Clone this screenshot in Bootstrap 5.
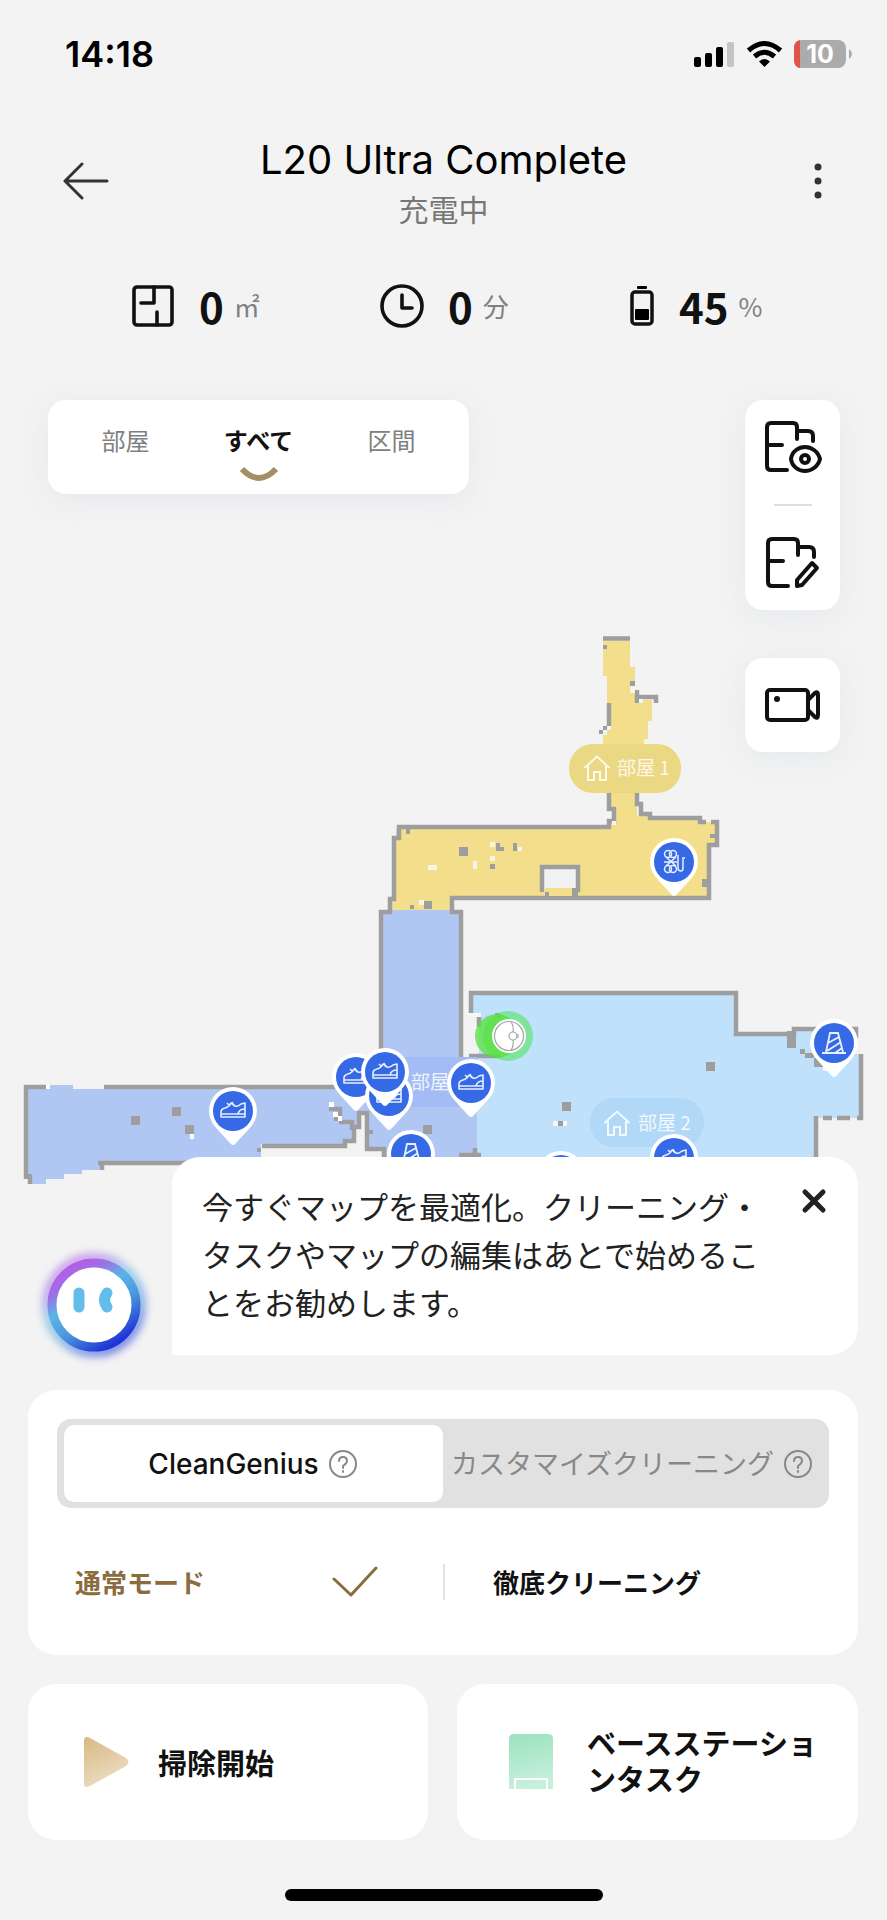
<!DOCTYPE html>
<html lang="ja">
<head>
<meta charset="utf-8">
<meta name="viewport" content="width=device-width, initial-scale=1">
<title>L20 Ultra Complete</title>
<link href="https://cdn.jsdelivr.net/npm/bootstrap@5.3.0/dist/css/bootstrap.min.css" rel="stylesheet">
<style>
  body { background: #f3f3f3; color: #111; font-family: Inter, "Noto Sans CJK JP", sans-serif; }
  button { border: 0; background: none; padding: 0; color: inherit; }
  svg { display: block; flex: none; }
  .jp { font-family: "Noto Sans CJK JP", sans-serif; }
  .line { fill: none; stroke: currentColor; stroke-linecap: round; stroke-linejoin: round; }

  .status-bar { height: 108px; padding: 0 34px 0 65px; color: #000; }
  .clock { font-size: 36px; font-weight: 600; }

  .app-header { padding: 28px 45px 50px; }
  .head-btn { width: 64px; height: 90px; color: #333; }
  .app-title { font-size: 40px; line-height: 48px; font-weight: 400; color: #000; margin: 0; }
  .app-state { font-size: 30px; line-height: 48px; color: #777; }

  .stats { padding: 0 70px 40px; }
  .stat { height: 48px; padding-left: 62px; }
  .stat-num { font-size: 42px; line-height: 48px; font-weight: 700; margin: 0 10px 0 25px; }
  .stat-unit { font-size: 26px; line-height: 48px; color: #808080; }

  .map-stage { position: relative; }
  .map-stage > svg { width: 100%; height: auto; }
  .map-controls { position: absolute; inset: 30px 47px auto 48px; }
  .float-card { background: #fff; border-radius: 18px; box-shadow: 0 6px 24px rgba(190, 205, 220, .25); }
  .mode-tabs { width: 421px; height: 94px; padding: 0 11px; }
  .mode-tabs button { flex: 1 1 0; gap: 10px; font-size: 24px; line-height: 32px; color: #808080; padding-top: 24px; }
  .mode-tabs .active { color: #111; font-weight: 700; }
  .tool-btn { width: 95px; height: 94px; }
  .tool-rule { width: 38px; height: 2px; background: #dedede; margin: 10px 0; }

  .assistant { margin-top: -33px; padding: 0 29px 0 28px; position: relative; }
  .avatar { width: 144px; padding-right: 12px; }
  .bubble { background: #fff; border-radius: 28px 28px 28px 0; padding: 25px 30px 29px; font-size: 31px; line-height: 48px; color: #222; }
  .bubble-close { height: 32px; margin: 3px 0; }

  .panel { background: #fff; border-radius: 28px; margin: 35px 29px 0 28px; padding: 29px; }
  .segment { background: #e1e1e1; border-radius: 14px; padding: 6px 7px; height: 89px; color: #888; }
  .segment button { border-radius: 10px; flex: 1 1 50%; white-space: nowrap; }
  .segment .active { background: #fff; }
  .seg-name { font-size: 28px; font-weight: 500; color: #111; }
  .seg-jp { font-size: 27px; }
  .programs { margin: 55px 0 25px; height: 38px; font-size: 26px; }
  .programs button { flex: 1 1 50%; font-weight: 700; line-height: 36px; }
  .program-on { color: #8a6c3e; padding: 0 65px 0 18px; }
  .program-off { border-left: 2px solid #e2e2e2; padding-left: 48px; text-align: left; }

  .actions { margin: 29px 29px 0 28px; gap: 29px; }
  .actions button { background: #fff; border-radius: 28px; height: 156px; flex: 1 1 50%; text-align: left; font-size: 29px; line-height: 36px; font-weight: 700; }
  .start-btn { padding-left: 56px; }
  .base-btn { padding: 0 29px 0 52px; }
  .base-name { padding: 0 0 4px 34px; }
  .home-bar { width: 318px; height: 12px; border-radius: 6px; background: #000; margin: 49px auto 19px; }
</style>
</head>
<body>

<div class="status-bar d-flex align-items-center justify-content-between">
  <span class="clock">14:18</span>
  <svg width="160" height="32" viewBox="694 38 160 32" aria-hidden="true">
    <rect x="695" y="57" width="7" height="10" rx="2"/>
    <rect x="706" y="53" width="7" height="14" rx="2"/>
    <rect x="717" y="47" width="7" height="20" rx="2"/>
    <rect x="728" y="42" width="7" height="25" rx="2" fill="#c4c4c4"/>
    <g fill="none" stroke="#000" stroke-width="5">
      <path d="M749.500 50.500 Q765.500 36.500 781.500 50.500"/>
      <path d="M755.500 56.500 Q765.500 48 775.500 56.500"/>
    </g>
    <path d="M765.500 67 L760 61.500 Q765.500 56.500 771 61.500Z"/>
    <rect x="795" y="40" width="52" height="28" rx="8" fill="#ababab"/>
    <path d="M801 40Q795 41 795 48V60Q795 67 801 68Z" fill="#e25449"/>
    <path d="M850 49 Q853 51 853 54 Q853 57 850 59Z" fill="#ababab"/>
    <text x="821" y="63" text-anchor="middle" font-family="Inter, sans-serif" font-size="25" font-weight="700" fill="#fff">10</text>
  </svg>
</div>

<header class="app-header d-flex align-items-start justify-content-between">
  <button class="head-btn d-flex align-items-center justify-content-end" aria-label="戻る">
    <svg class="line" width="46" height="40" viewBox="0 0 46 40" stroke-width="3"><path d="M44 20H2M19 3 2 20 19 37"/></svg>
  </button>
  <div class="text-center">
    <h1 class="app-title">L20 Ultra Complete</h1>
    <div class="app-state jp">充電中</div>
  </div>
  <button class="head-btn d-flex align-items-center justify-content-end" aria-label="メニュー">
    <svg width="48" height="40" viewBox="0 0 48 40" fill="currentColor"><circle cx="24" cy="6" r="3.500"/><circle cx="24" cy="20" r="3.500"/><circle cx="24" cy="34" r="3.500"/></svg>
  </button>
</header>

<section class="stats row g-0 jp">
  <div class="col stat d-flex align-items-center">
    <svg class="line" width="42" height="42" viewBox="0 0 42 42" stroke-width="3.600"><rect x="2" y="2" width="38" height="38" rx="3"/><path d="M22 2V18H9M25 40V27"/></svg>
    <span class="stat-num">0</span><span class="stat-unit">㎡</span>
  </div>
  <div class="col stat d-flex align-items-center">
    <svg class="line" width="42" height="44" viewBox="1 0 42 44" overflow="visible" stroke-width="3.600"><circle cx="22" cy="22" r="20"/><path d="M22 11V24H32"/></svg>
    <span class="stat-num">0</span><span class="stat-unit">分</span>
  </div>
  <div class="col stat d-flex align-items-center">
    <svg width="24" height="42" viewBox="0 0 24 42"><rect x="7" y="1" width="10" height="3" rx="1"/><rect x="2" y="7" width="20" height="32" rx="3" fill="none" stroke="#111" stroke-width="3.500"/><rect x="5" y="24" width="14" height="11" rx="1"/></svg>
    <span class="stat-num">45</span><span class="stat-unit">%</span>
  </div>
</section>

<main>
<section class="map-stage">
  <svg viewBox="0 370 887 820" role="img" aria-label="間取りマップ">
    <defs>
      <g id="pin">
        <path d="M-24 0A24 24 0 1 1 24 0Q24 10 15 19L3 32Q0 36-3 32L-15 19Q-24 10-24 0Z" fill="#fff"/>
        <circle r="20" fill="#3569e6"/>
      </g>
      <g id="shoe">
        <use href="#pin"/>
        <path d="M-12 6V1Q-12-2-8-3Q-4-4-2-8L2-5Q5-4 8-7L12-8V6ZM-12 3H12M5 3Q6-2 12-2M-6-8-3-5M-1-9 1-5" fill="none" stroke="#e8f0ff" stroke-width="1.600" stroke-linejoin="round"/>
      </g>
      <g id="cone">
        <use href="#pin"/>
        <path d="M-12 10H12M-8 9-4-10H4L9 9M-6 0 5-6M-7 8 7-1M1 10 8 5" fill="none" stroke="#e8f0ff" stroke-width="1.800"/>
      </g>
      <path id="house" d="M-12.500 0 0-11.500 12.500 0M-9-2V12H-3V4H3V12H9V-2" fill="none" stroke="#fff" stroke-opacity=".85" stroke-width="2"/>
    </defs>

    <!-- room 1 -->
    <path fill="#f3df8b" d="M603 641H630V667H635V700H652V721H648V739H644V748H637V816H650V820H702V822H715V845H709V896H453V911H390V899H396V829H609V820H614V809H609V748H603V735H607V730H611V703H607V676H603Z"/>

    <!-- room 2 -->
    <path fill="#bfe1fc" d="M472 994H734V1035H794V1031H856V1054H859V1118H816V1162H477V1056H479V1013H472Z"/>
    <path fill="none" stroke="#9e9e9e" stroke-width="4.500" d="M471 1015V993H736V1034H794V1029H856V1038M861 1054V1118H857M850 1118H837M832 1118H823M816 1116V1162M469 1056H500M479 1017V1027"/>
    <path fill="#9e9e9e" d="M787 1031h9v17h-9zM800 1049h5v5h-5zM805 1053h9v5h-9zM814 1058h9v9h-9zM706 1062h9v9h-9zM562 1102h9v9h-9zM558 1121h5v5h-5zM495 1013h5v4h-5z"/>
    <path fill="#f6f6f6" d="M468 1013h13v4h-13zM553 1121h5v5h-5zM563 1121h4v5h-4zM823 1067h6v4h-6z"/>

    <!-- room 3 and the western wing -->
    <path fill="#b0c7f3" d="M382 910H461V1058H477V1162H384V1148H368V1112H357V1128H352V1141H344V1144H261V1162H100V1170H82V1174H64V1179H46V1184H32V1175H28V1089H50V1085H73V1089H382Z"/>
    <path fill="none" stroke="#9e9e9e" stroke-width="4.500" d="M46 1087H26V1179M104 1087H380M30 1174V1184M200 1163H98M102 1163V1170M262 1146H345V1141H354V1127H359V1113H367V1149H384V1162M329 1109H340V1116M339 1122H352V1130M459 1155H481M475 1148V1155"/>
    <path fill="#9e9e9e" d="M257 1148h4v4h-4zM131 1116h9v9h-9zM172 1107h9v9h-9zM185 1125h9v9h-9zM334 1117h5v4h-5zM369 1130h4v4h-4zM423 1125h9v9h-9z"/>
    <path fill="#fff" d="M46 1085h4v4h-4zM190 1134h4v5h-4zM329 1102h5v5h-5zM333 1112h5v5h-5zM338 1116h4v5h-4z"/>

    <!-- walls and marks of room 1 and the corridor -->
    <g fill="none" stroke="#9e9e9e" stroke-width="4.500">
      <path d="M603 638.500H630M609 703V726M609 785V809H614V821H609V827H399V838H394V899H390V912H381V1060M637 785V804H641V814H650V818H700V822H706M711 822H717V845H709V898H452V912H461V1058M637 690V703M637 697H656V703"/>
      <path d="M542 892V867H578V892" fill="#f1f1f1"/>
    </g>
    <path fill="#f3df8b" d="M545 888H575V896H545Z"/>
    <path fill="#9e9e9e" d="M545 892h4v5h-4zM572 888h6v9h-6zM459 847h9v9h-9zM496 843h4v4h4v4h-8zM513 843h4v8h-4zM490 864h5v5h-5zM424 901h8v8h-8zM410 905h4v4h-4zM406 829h4v5h-4zM702 879h6v8h-6zM710 834h6v4h-6zM603 645h4v4h-4zM630 681h5v5h-5zM603 726h4v4h-4zM599 730h4v4h-4z"/>
    <path fill="#f7f5ea" d="M490 842h5v5h-5zM518 847h4v4h-4zM490 856h5v5h-5zM473 861h4v8h-4zM428 865h9v5h-9zM419 900h5v5h-5zM630 686h5v7h-5zM639 699h4v4h-4zM612 821h4v4h-4z"/>

    <!-- room labels -->
    <rect x="569" y="744" width="112" height="49" rx="24" fill="#ebd882"/>
    <use href="#house" x="597" y="768"/>
    <rect x="590" y="1098" width="114" height="49" rx="24" fill="#b1d8f7"/>
    <use href="#house" x="617" y="1123"/>
    <path fill="#a4bcf5" d="M383 1057H477V1107H383Z"/>
    <g font-family="'Noto Sans CJK JP', sans-serif" font-size="19" fill="#fff" fill-opacity=".85">
      <text x="617" y="775">部屋 1</text>
      <text x="638" y="1130">部屋 2</text>
      <text x="411" y="1089">部屋</text>
    </g>

    <!-- dock and robot -->
    <circle cx="508" cy="1036" r="25" fill="#5ee36a" fill-opacity=".65"/>
    <circle cx="497" cy="1036" r="22" fill="#55e23a" fill-opacity=".75"/>
    <circle cx="509" cy="1036" r="17" fill="#fff"/>
    <g fill="none" stroke="#a5a5a5" stroke-width="1.200"><circle cx="509" cy="1036" r="14.500"/><circle cx="513" cy="1036" r="4"/><path d="M511 1022Q514 1026 513 1032M513 1040Q514 1046 511 1050M518 1034V1038"/></g>

    <!-- obstacle pins -->
    <use href="#shoe" x="356" y="1077"/>
    <use href="#shoe" x="389" y="1096"/>
    <use href="#shoe" x="385" y="1072"/>
    <use href="#shoe" x="471" y="1083"/>
    <use href="#shoe" x="233" y="1111"/>
    <use href="#shoe" x="674" y="1158"/>
    <use href="#cone" x="834" y="1043"/>
    <use href="#cone" x="411" y="1154"/>
    <use href="#pin" x="561" y="1175"/>
    <use href="#pin" x="674" y="862"/>
    <g transform="translate(674 862)" fill="none" stroke="#e8f0ff" stroke-width="1.500">
      <circle cx="-6" cy="-8" r="3.500"/><circle cx="-1" cy="-8" r="3.500"/><circle cx="-6" cy="7" r="3.500"/><circle cx="-1" cy="7" r="3.500"/><path d="M-10 0H3M-8-5 2 4M2-5-8 4M4-7V6Q4 9 7 9Q9 9 9 6V-3M8-4H11"/>
    </g>
  </svg>

  <div class="map-controls d-flex justify-content-between align-items-start">
    <div class="float-card mode-tabs d-flex jp">
      <button class="d-flex flex-column align-items-center">部屋</button>
      <button class="active d-flex flex-column align-items-center">すべて
        <svg width="40" height="17" viewBox="0 0 40 17"><path d="M3 3Q20 21 37 3" fill="none" stroke="#a58e66" stroke-width="6"/></svg>
      </button>
      <button class="d-flex flex-column align-items-center">区間</button>
    </div>
    <div class="d-flex flex-column">
      <div class="float-card d-flex flex-column align-items-center mb-5">
        <button class="tool-btn d-flex align-items-center justify-content-center" aria-label="表示">
          <svg class="line" width="58" height="54" viewBox="0 0 58 54" stroke-width="4"><path d="M23 50H7Q3 50 3 46V7Q3 3 7 3H29Q33 3 33 7V19M33 11H44Q49 11 49 16V21M3 25H18"/><path d="M27 39C28 31 35 27 41 27S54 31 56 39C54 47 47 51 41 51S28 47 27 39Z"/><circle cx="41" cy="39" r="4"/></svg>
        </button>
        <div class="tool-rule"></div>
        <button class="tool-btn d-flex align-items-center justify-content-center" aria-label="編集">
          <svg class="line" width="56" height="54" viewBox="0 0 56 54" stroke-width="4"><path d="M23 50H7Q3 50 3 46V7Q3 3 7 3H29Q33 3 33 7V19M33 11H44Q49 11 49 16V21M3 25H18"/><path d="M32 50V44L47 27L52 32L37 49Z"/></svg>
        </button>
      </div>
      <button class="float-card tool-btn d-flex align-items-center justify-content-center" aria-label="カメラ">
        <svg class="line" width="56" height="36" viewBox="0 0 56 36" stroke-width="4"><rect x="2" y="3" width="41" height="30" rx="3"/><path d="M43 13 50 6Q53 4 53 8V28Q53 32 50 30L43 23"/><circle cx="12" cy="12" r="3" fill="currentColor" stroke="none"/></svg>
      </button>
    </div>
  </div>
</section>

<section class="assistant d-flex align-items-end">
  <div class="avatar">
    <svg width="132" height="98" viewBox="0 0 132 98" overflow="visible" aria-hidden="true">
      <defs>
        <linearGradient id="ring" x1="20%" y1="5%" x2="75%" y2="95%">
          <stop offset="0" stop-color="#b45de6"/><stop offset=".18" stop-color="#9a72e6"/><stop offset=".38" stop-color="#5bb4e6"/><stop offset=".65" stop-color="#4a97de"/><stop offset="1" stop-color="#2036d6"/>
        </linearGradient>
        <filter id="glow" x="-30%" y="-30%" width="160%" height="160%"><feGaussianBlur stdDeviation="4"/></filter>
      </defs>
      <circle cx="66" cy="48" r="47" fill="none" stroke="url(#ring)" stroke-width="9" opacity=".65" filter="url(#glow)"/>
      <circle cx="66" cy="48" r="42" fill="#fff" stroke="url(#ring)" stroke-width="9"/>
      <path d="M51 36V50M79 36Q74 43 79 50" fill="none" stroke="#63bdeb" stroke-width="11" stroke-linecap="round"/>
    </svg>
  </div>
  <div class="bubble flex-fill d-flex justify-content-between align-items-start jp">
    <div>今すぐマップを最適化。クリーニング・<br>タスクやマップの編集はあとで始めるこ<br>とをお勧めします。</div>
    <button class="bubble-close" aria-label="閉じる">
      <svg class="line" width="28" height="32" viewBox="0 0 28 32" stroke-width="5"><path d="M5 7 23 25M23 7 5 25"/></svg>
    </button>
  </div>
</section>

<section class="panel">
  <div class="segment d-flex">
    <button class="active d-flex align-items-center justify-content-center gap-2">
      <span class="seg-name">CleanGenius</span>
      <svg class="line" width="32" height="32" viewBox="0 0 32 32" stroke="#888" stroke-width="2"><circle cx="16" cy="16" r="13"/><path d="M12 13Q12 9 16 9Q20 9 20 13Q20 15 16 18V20M16 23V24"/></svg>
    </button>
    <button class="d-flex align-items-center justify-content-center gap-2 jp">
      <span class="seg-jp">カスタマイズクリーニング</span>
      <svg class="line" width="32" height="32" viewBox="0 0 32 32" stroke="#888" stroke-width="2"><circle cx="16" cy="16" r="13"/><path d="M12 13Q12 9 16 9Q20 9 20 13Q20 15 16 18V20M16 23V24"/></svg>
    </button>
  </div>
  <div class="programs d-flex align-items-center jp">
    <button class="program-on d-flex align-items-center justify-content-between">通常モード
      <svg class="line" width="46" height="32" viewBox="0 0 46 32" stroke-width="3"><path d="M2 13 19 29 44 2"/></svg>
    </button>
    <button class="program-off">徹底クリーニング</button>
  </div>
</section>

<section class="actions d-flex jp">
  <button class="start-btn d-flex align-items-center">
    <svg width="46" height="54" viewBox="0 0 46 54"><defs><linearGradient id="sand" x1="0" y1="0" x2=".4" y2="1"><stop offset="0" stop-color="#d8b983"/><stop offset="1" stop-color="#eadcc2"/></linearGradient></defs><path d="M0 6Q0 0 6 3L42 23Q47 27 42 31L6 51Q0 54 0 48Z" fill="url(#sand)"/></svg>
    <span class="ms-4 ps-1">掃除開始</span>
  </button>
  <button class="base-btn d-flex align-items-center">
    <svg width="44" height="56" viewBox="0 0 44 56"><defs><linearGradient id="mint" x1="0" y1="0" x2=".2" y2="1"><stop offset="0" stop-color="#9be2bd"/><stop offset="1" stop-color="#c6f0dc"/></linearGradient></defs><path d="M0 5Q0 0 5 0H39Q44 0 44 5V55H0Z" fill="url(#mint)"/><path d="M6 56V45H38V56" fill="none" stroke="#fff" stroke-width="2"/></svg>
    <span class="base-name">ベースステーションタスク</span>
  </button>
</section>
</main>

<div class="home-bar"></div>

<script src="https://cdn.jsdelivr.net/npm/bootstrap@5.3.0/dist/js/bootstrap.bundle.min.js"></script>
</body>
</html>
